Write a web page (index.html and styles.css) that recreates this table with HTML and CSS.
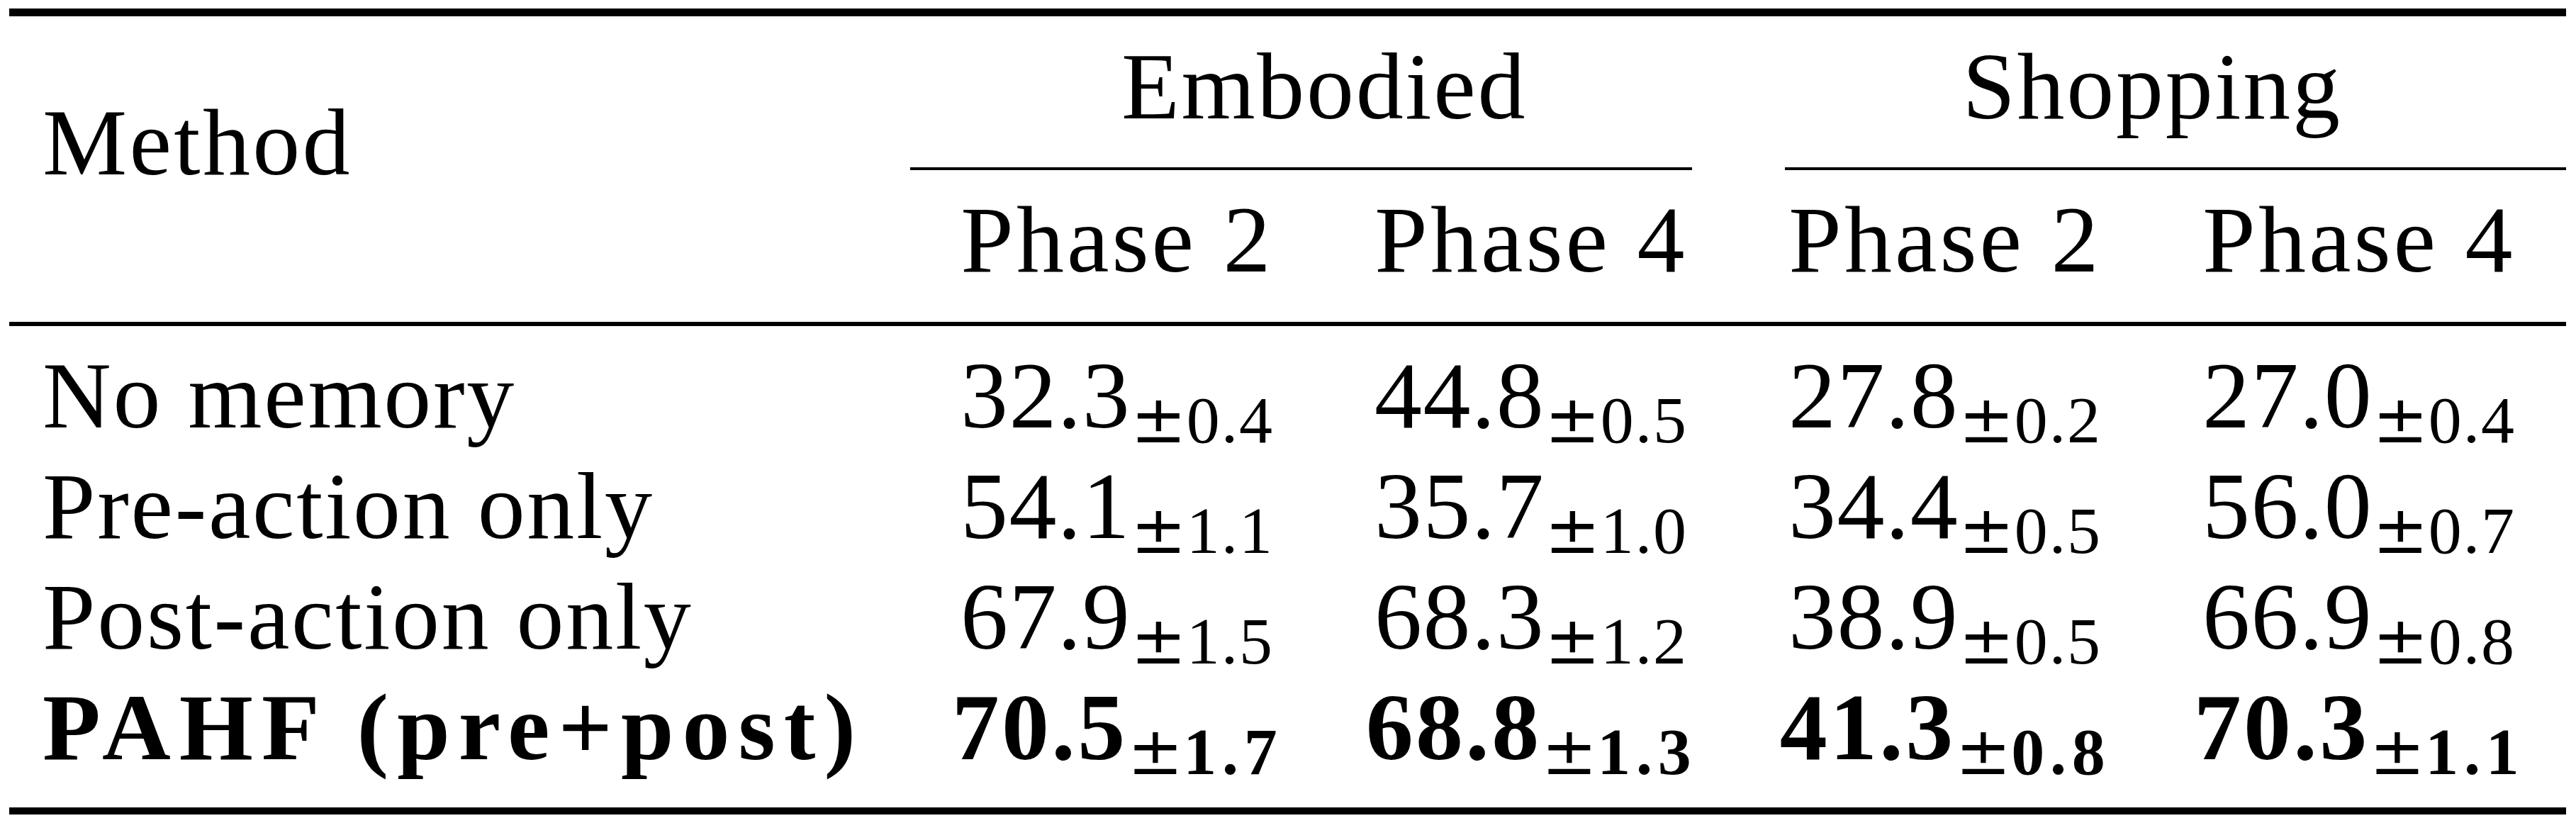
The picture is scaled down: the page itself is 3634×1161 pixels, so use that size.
FILE: index.html
```html
<!DOCTYPE html>
<html lang="en">
<head>
<meta charset="utf-8">
<title>Results table</title>
<link rel="stylesheet" href="styles.css">
</head>
<body>
<div class="table">
  <div class="head">
    <div class="method">Method</div>
    <div class="group g1">Embodied</div>
    <div class="group g2">Shopping</div>
    <div class="cmid c1"></div>
    <div class="cmid c2"></div>
    <div class="phase">Phase 2</div>
    <div class="phase">Phase 4</div>
    <div class="phase">Phase 2</div>
    <div class="phase">Phase 4</div>
  </div>
  <div class="body">
    <div class="row">
      <div class="lbl">No memory</div>
      <div class="num"><span class="v">32.3</span><span class="sd"><span class="pm">±</span>0.4</span></div>
      <div class="num"><span class="v">44.8</span><span class="sd"><span class="pm">±</span>0.5</span></div>
      <div class="num"><span class="v">27.8</span><span class="sd"><span class="pm">±</span>0.2</span></div>
      <div class="num"><span class="v">27.0</span><span class="sd"><span class="pm">±</span>0.4</span></div>
    </div>
    <div class="row">
      <div class="lbl">Pre-action only</div>
      <div class="num"><span class="v">54.1</span><span class="sd"><span class="pm">±</span>1.1</span></div>
      <div class="num"><span class="v">35.7</span><span class="sd"><span class="pm">±</span>1.0</span></div>
      <div class="num"><span class="v">34.4</span><span class="sd"><span class="pm">±</span>0.5</span></div>
      <div class="num"><span class="v">56.0</span><span class="sd"><span class="pm">±</span>0.7</span></div>
    </div>
    <div class="row">
      <div class="lbl">Post-action only</div>
      <div class="num"><span class="v">67.9</span><span class="sd"><span class="pm">±</span>1.5</span></div>
      <div class="num"><span class="v">68.3</span><span class="sd"><span class="pm">±</span>1.2</span></div>
      <div class="num"><span class="v">38.9</span><span class="sd"><span class="pm">±</span>0.5</span></div>
      <div class="num"><span class="v">66.9</span><span class="sd"><span class="pm">±</span>0.8</span></div>
    </div>
    <div class="row best">
      <div class="lbl">PAHF (pre+post)</div>
      <div class="num"><span class="v">70.5</span><span class="sd"><span class="pm">±</span>1.7</span></div>
      <div class="num"><span class="v">68.8</span><span class="sd"><span class="pm">±</span>1.3</span></div>
      <div class="num"><span class="v">41.3</span><span class="sd"><span class="pm">±</span>0.8</span></div>
      <div class="num"><span class="v">70.3</span><span class="sd"><span class="pm">±</span>1.1</span></div>
    </div>
  </div>
</div>
</body>
</html>
```
FILE: styles.css
```css
html, body {
  margin: 0;
  padding: 0;
  background: #ffffff;
}

.table {
  margin: 12px 0 0 13px;
  width: 3607px;
  border-top: 11px solid #000;
  border-bottom: 10px solid #000;
  font-family: "Liberation Serif", "Times New Roman", serif;
  font-size: 134px;
  color: #000;
}

.head {
  display: grid;
  grid-template-columns: 1271px repeat(4, 584px);
  grid-template-rows: auto 4px auto;
  border-bottom: 6px solid #000;
}

.method {
  grid-row: 1 / 4;
  grid-column: 1;
  align-self: start;
  padding: 104px 0 0 47px;
  line-height: 148px;
  letter-spacing: 0.025em;
}

.group {
  grid-row: 1;
  text-align: center;
  line-height: 148px;
  padding: 25px 0 40px;
  letter-spacing: 0.02em;
}

.g1 { grid-column: 2 / 4; }
.g2 { grid-column: 4 / 6; }

.cmid {
  grid-row: 2;
  background: #000;
  height: 4px;
}

.c1 { grid-column: 2 / 4; margin-right: 65px; }
.c2 { grid-column: 4 / 6; margin-left: 66px; }

.phase {
  grid-row: 3;
  text-align: center;
  line-height: 148px;
  padding: 24px 0 42px;
  letter-spacing: 0.03em;
}

.body {
  padding: 20px 0 35px;
}

.row {
  display: grid;
  grid-template-columns: 1271px repeat(4, 584px);
  height: 156px;
  line-height: 156px;
}

.lbl {
  padding-left: 47px;
  white-space: nowrap;
  letter-spacing: 0.02em;
}

.num {
  text-align: center;
  white-space: nowrap;
}

.v {
  letter-spacing: 0.01em;
}

.sd {
  font-size: 94px;
  line-height: 0;
  vertical-align: -21px;
  letter-spacing: 0.02em;
}

.pm {
  font-family: "DejaVu Serif", "Liberation Serif", serif;
  font-weight: 400;
  letter-spacing: 0;
}

.best {
  font-weight: 700;
}

.best .lbl {
  letter-spacing: 0.09em;
}

.best .v {
  letter-spacing: 0.025em;
}

.best .sd {
  letter-spacing: 0.08em;
}
```
